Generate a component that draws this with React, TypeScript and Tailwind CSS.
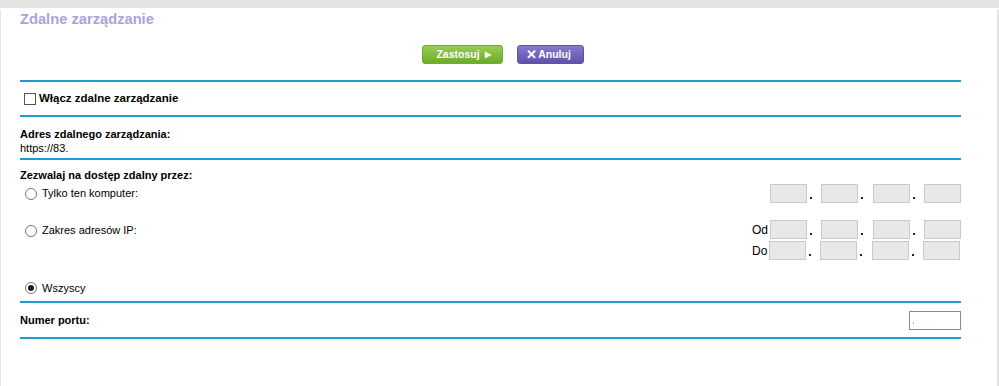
import React from 'react';

const Line = () => <div className="h-[2px] bg-[#1f9bd4] w-[941px]" />;

const IpBox = () => <div className="w-[37px] h-[19px] bg-[#e8e8e8] border border-[#c9c9c9]" />;

const Dot = ({ w }: { w: string }) => (
  <span className={`${w} h-[19px] flex items-end pl-[3px] pb-[4px]`}>
    <span className="w-[2px] h-[2px] bg-[#222]" />
  </span>
);

const IpRow = ({ label }: { label?: string }) => (
  <div className="flex items-center">
    {label && <span className="mr-[2px] text-[12px]">{label}</span>}
    <IpBox />
    <Dot w="w-[14px]" />
    <IpBox />
    <Dot w="w-[15px]" />
    <IpBox />
    <Dot w="w-[14px]" />
    <IpBox />
  </div>
);

const Radio = ({ checked }: { checked?: boolean }) => (
  <span className="w-[12px] h-[12px] rounded-full border border-[#777] bg-white flex items-center justify-center">
    {checked && <span className="w-[6px] h-[6px] rounded-full bg-[#1d1d1d]" />}
  </span>
);

export default function App() {
  return (
    <div className="w-[999px] h-[386px] bg-white text-[11px] text-black" style={{ fontFamily: '"Liberation Sans", Arial, sans-serif' }}>
      <div className="h-[8px] bg-[#e4e4e4]" />
      <div className="h-[378px] border-l border-l-[#e6e6e6] border-r-2 border-r-[#e2e2e2] pl-[19px]">
        <h1 className="mt-[2px] text-[14.7px] leading-[18px] font-bold text-[#aaa3d9]">Zdalne zarządzanie</h1>

        <div className="w-[941px] flex justify-center gap-[14px] mt-[17px] pl-[25px]">
          <button className="h-[19px] w-[81px] rounded-[3px] border border-[#73ab33] bg-gradient-to-b from-[#96cd4f] to-[#6dab2c] text-white font-bold text-[10.5px] flex items-center justify-center gap-[5px] pl-[2px]">
            Zastosuj <span className="text-[8px]">▶</span>
          </button>
          <button className="h-[19px] w-[67px] rounded-[3px] border border-[#5e52a6] bg-gradient-to-b from-[#8579cf] to-[#5f52aa] text-white font-bold text-[10.5px] flex items-center justify-center gap-[1px] pr-[4px]">
            <span className="text-[13px] leading-none">✕</span>Anuluj
          </button>
        </div>

        <div className="mt-[16px]"><Line /></div>

        <div className="h-[33px] flex items-center pl-[4px] gap-[3px] font-bold text-[11.5px]">
          <span className="w-[12px] h-[12px] border border-[#555] bg-white" />
          <span>Włącz zdalne zarządzanie</span>
        </div>
        <Line />

        <div className="h-[41px] pt-[10px] leading-[14px]">
          <div className="font-bold">Adres zdalnego zarządzania:</div>
          <div>https://83.</div>
        </div>
        <Line />

        <div className="w-[941px]">
          <div className="font-bold pt-[8px] leading-[15px]">Zezwalaj na dostęp zdalny przez:</div>
          <div className="flex justify-between items-center h-[19px] mt-[1px]">
            <div className="flex items-center gap-[5px] pl-[5px]"><Radio /><span>Tylko ten komputer:</span></div>
            <IpRow />
          </div>
          <div className="flex justify-between items-start mt-[17px]">
            <div className="flex items-center gap-[5px] pl-[5px] h-[19px] pt-[2px]"><Radio /><span>Zakres adresów IP:</span></div>
            <div className="flex flex-col gap-[2px]">
              <IpRow label="Od" />
              <IpRow label="Do" />
            </div>
          </div>
          <div className="flex items-center gap-[5px] pl-[5px] mt-[20px] h-[16px]"><Radio checked /><span>Wszyscy</span></div>
        </div>

        <div className="mt-[5px]"><Line /></div>
        <div className="w-[941px] h-[34px] flex justify-between items-center">
          <span className="font-bold">Numer portu:</span>
          <div className="w-[52px] h-[19px] border border-[#8a8a8a] bg-white flex items-end pl-[3px] pb-[5px]">
            <span className="w-[1px] h-[2px] bg-[#f0a030]" />
          </div>
        </div>
        <Line />
      </div>
    </div>
  );
}
